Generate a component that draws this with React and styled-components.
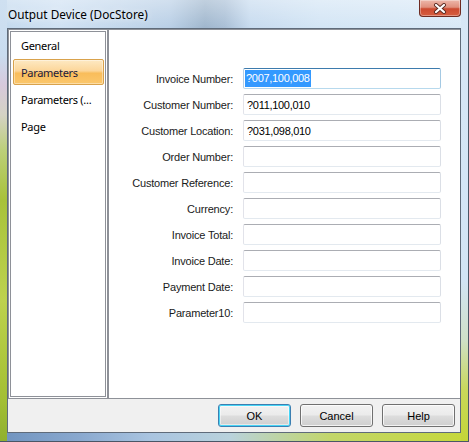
import React from "react";
import styled, { createGlobalStyle, css } from "styled-components";

const Global = createGlobalStyle`
  html, body { margin: 0; padding: 0; background: #fff; }
  body { width: 469px; height: 442px; overflow: hidden; }
`;

const Window = styled.div`
  width: 469px;
  height: 442px;
  box-sizing: border-box;
  display: flex;
  flex-direction: column;
  padding: 0 7px 8px 7px;
  border-right: 1px solid #4a5666;
  border-bottom: 1px solid #4a5666;
  font-family: "Liberation Sans", Arial, sans-serif;
  background:
    linear-gradient(to bottom, #cfe0f1 0, #c9dcef 55px, #d7c9dc 85px, #d4d2c4 115px, #bccf7a 150px, #a8c23a 200px, #bdd24e 300px, #a3bf33 400px, #8fb030 100%) left top / 7px 100% no-repeat,
    linear-gradient(to bottom, #d7e7f6 0, #d2e4f5 280px, #cfe0c8 340px, #c9d85a 390px, #c4d538 100%) right top / 7px 100% no-repeat,
    linear-gradient(to right, #6f93bf 0, #8aa9cf 80px, #a9c4e0 150px, #b9d2dc 230px, #c2d66a 330px, #c6d83a 100%) left bottom / 100% 8px no-repeat,
    linear-gradient(to bottom, rgba(255,255,255,0.35) 0, rgba(255,255,255,0) 28px),
    linear-gradient(to right, #c3d9ee 0, #cfe1f3 60px, #b9cfe6 170px, #9fb6cd 205px, #a9bfd6 225px, #c7dbef 250px, #d3e5f5 320px, #d9e9f7 100%);
`;

const TitleBar = styled.div`
  height: 28px;
  flex: none;
  display: flex;
  align-items: flex-start;
  justify-content: space-between;
  padding-left: 1px;
  margin-right: -1px;
`;

const Title = styled.div`
  line-height: 28px;
  font-family: "Noto Sans", "Open Sans", sans-serif;
  font-size: 11.8px;
  color: #000;
  text-shadow: 0 0 6px rgba(255,255,255,0.9);
`;

const CloseButton = styled.div`
  width: 42px;
  height: 17px;
  margin-right: 1px;
  box-sizing: border-box;
  display: flex;
  align-items: center;
  justify-content: center;
  border: 1px solid #6e2b22;
  border-top: none;
  border-radius: 0 0 4px 4px;
  background:
    linear-gradient(to bottom, #edb7aa 0, #e0907d 45%, #cc4a30 55%, #d65e40 100%);
  box-shadow: inset 0 0 0 1px rgba(255,255,255,0.35);
`;

const Client = styled.div`
  flex: 1;
  display: flex;
  flex-direction: column;
  background: #f0f0f0;
  border: 1px solid #5f6b7a;
`;

const Panels = styled.div`
  height: 370px;
  display: flex;
`;

const NavPanel = styled.div`
  width: 100px;
  box-sizing: border-box;
  border: 3px double #8e9198;
  background: #fff;
  display: flex;
  flex-direction: column;
  gap: 1px;
  padding: 0 1px 0 2px;
`;

const NavItem = styled.div`
  height: 26px;
  box-sizing: border-box;
  display: flex;
  align-items: center;
  padding-left: 7px;
  font-family: "Noto Sans", "Open Sans", sans-serif;
  font-size: 11px;
  letter-spacing: -0.3px;
  color: #000;
  border: 1px solid transparent;
  border-radius: 2px;
  white-space: nowrap;
  ${(p) =>
    p.$active &&
    css`
      color: #1b1b3e;
      border-color: #d9a24c;
      background: linear-gradient(to bottom, #fde9c3 0, #fcd69a 45%, #f9bd5b 55%, #fbc76c 100%);
      box-shadow: inset 0 0 0 1px rgba(255,255,255,0.4);
    `}
`;

const ContentPanel = styled.div`
  flex: 1;
  border: 1px solid #8e9198;
  border-right: none;
  background: #fff;
  display: grid;
  grid-template-columns: 1fr 198px;
  grid-auto-rows: 21px;
  column-gap: 10px;
  row-gap: 5px;
  align-content: start;
  padding: 38px 19px 0 0;
`;

const Label = styled.div`
  justify-self: end;
  align-self: center;
  font-size: 11px;
  letter-spacing: -0.2px;
  color: #1a1a1a;
  white-space: nowrap;
`;

const TextBox = styled.div`
  box-sizing: border-box;
  border: 1px solid;
  border-color: #abadb3 #dbdfe6 #e3e9ef #e2e3ea;
  border-radius: 2px;
  background: #fff;
  display: flex;
  align-items: center;
  padding-left: 1px;
  font-size: 11px;
  letter-spacing: -0.3px;
  color: #000;
  ${(p) =>
    p.$focused &&
    css`
      border-color: #3d7bad #a4c9e3 #b7d9ed #b5cfe7;
    `}
`;

const Selected = styled.span`
  background: #3399ff;
  color: #fff;
  line-height: 17px;
  padding: 0 1px 0 1px;
`;

const Plain = styled.span`
  padding-left: 2px;
`;

const Footer = styled.div`
  flex: 1;
  display: flex;
  justify-content: flex-end;
  align-items: flex-start;
  gap: 9px;
  padding: 5px 5px 0 0;
`;

const Button = styled.div`
  width: 73px;
  height: 23px;
  box-sizing: border-box;
  border: 1px solid #707070;
  border-radius: 3px;
  display: flex;
  align-items: center;
  justify-content: center;
  font-size: 11px;
  color: #000;
  background: linear-gradient(to bottom, #f2f2f2 0, #ebebeb 48%, #dddddd 52%, #cfcfcf 100%);
  box-shadow: inset 0 0 0 1px rgba(255,255,255,0.75);
  ${(p) =>
    p.$default &&
    css`
      border-color: #3c7fb1;
      box-shadow: inset 0 0 0 1px #48d5f6, inset 0 0 0 2px rgba(255,255,255,0.5);
    `}
`;

const fields = [
  ["Invoice Number:", "?007,100,008", true],
  ["Customer Number:", "?011,100,010"],
  ["Customer Location:", "?031,098,010"],
  ["Order Number:", ""],
  ["Customer Reference:", ""],
  ["Currency:", ""],
  ["Invoice Total:", ""],
  ["Invoice Date:", ""],
  ["Payment Date:", ""],
  ["Parameter10:", ""],
];

const nav = ["General", "Parameters", "Parameters (...", "Page"];

export default function App() {
  return (
    <>
      <Global />
      <Window>
        <TitleBar>
          <Title>Output Device (DocStore)</Title>
          <CloseButton>
            <svg width="14" height="11" viewBox="0 0 14 11">
              <path d="M3 2 L11 9 M11 2 L3 9" stroke="#5a2a22" strokeWidth="4" strokeLinecap="round" />
              <path d="M3 2 L11 9 M11 2 L3 9" stroke="#fff" strokeWidth="2.2" strokeLinecap="round" />
            </svg>
          </CloseButton>
        </TitleBar>
        <Client>
          <Panels>
            <NavPanel>
              {nav.map((n, i) => (
                <NavItem key={n} $active={i === 1}>
                  {n}
                </NavItem>
              ))}
            </NavPanel>
            <ContentPanel>
              {fields.map(([label, value, focused]) => (
                <React.Fragment key={label}>
                  <Label>{label}</Label>
                  <TextBox $focused={focused}>
                    {focused ? <Selected>{value}</Selected> : value ? <Plain>{value}</Plain> : null}
                  </TextBox>
                </React.Fragment>
              ))}
            </ContentPanel>
          </Panels>
          <Footer>
            <Button $default>OK</Button>
            <Button>Cancel</Button>
            <Button>Help</Button>
          </Footer>
        </Client>
      </Window>
    </>
  );
}
